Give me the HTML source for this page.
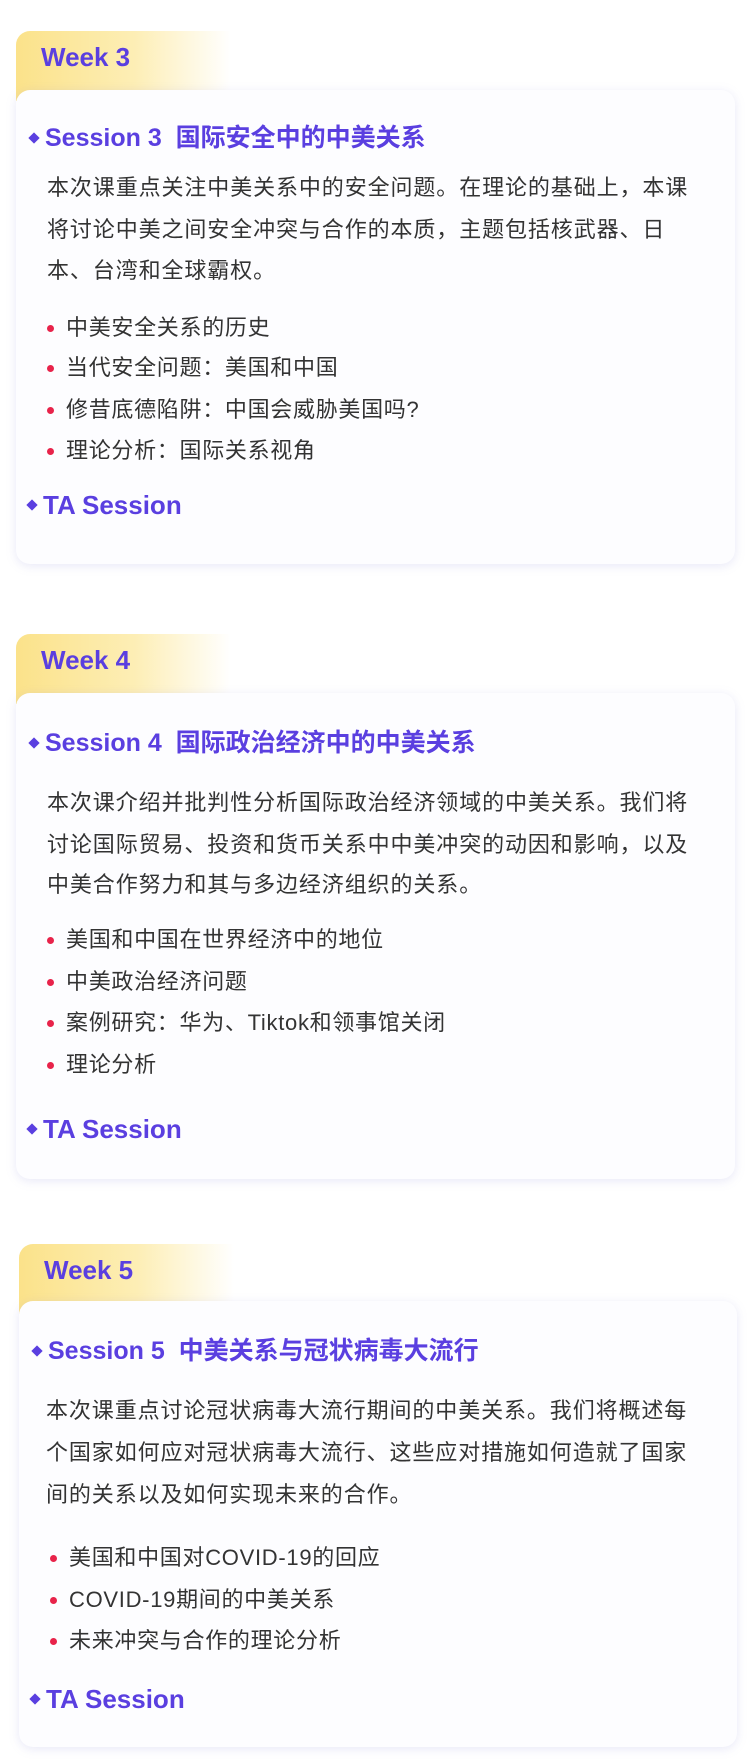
<!DOCTYPE html>
<html><head><meta charset="utf-8"><style>
*{margin:0;padding:0;box-sizing:border-box}
body{width:752px;height:1761px;background:#fff;position:relative;overflow:hidden;font-family:"Liberation Sans","Noto Sans CJK SC",sans-serif}
.tab{position:absolute;width:215px;height:70px;border-radius:14px 0 0 0;background:linear-gradient(90deg,#fbe28a 0%,#fdeeb5 55%,rgba(255,255,255,0) 100%)}
.tab span{position:absolute;left:25px;top:11px;font-size:26px;font-weight:bold;color:#5a3fe0}
.card{position:absolute;background:#fdfdff;border-radius:14px;box-shadow:0 2px 10px rgba(150,150,220,0.22)}
.l{position:absolute;height:40px;line-height:40px;white-space:nowrap}
.t{font-size:25px;font-weight:bold;color:#5a3fe0;padding-left:15px}
.t::before{content:"";position:absolute;left:0;top:16px;width:8px;height:8px;background:#5a3fe0;transform:rotate(45deg)}
.tt{font-size:26px}
.p{font-size:22px;color:#333;letter-spacing:0.9px}
.b{font-size:22px;color:#333;padding-left:19px;letter-spacing:0.7px}
.b::before{content:"";position:absolute;left:0;top:17px;width:7px;height:7px;border-radius:50%;background:#e8234a}
</style></head><body>

<div class="tab" style="left:16px;top:31px"><span>Week 3</span></div>
<div class="card" style="left:16px;top:90px;width:719px;height:474px"></div>
<div class="l t" style="left:30px;top:118px">Session 3&nbsp; 国际安全中的中美关系</div>
<div class="l p" style="left:47px;top:168px">本次课重点关注中美关系中的安全问题。在理论的基础上，本课</div>
<div class="l p" style="left:47px;top:210px">将讨论中美之间安全冲突与合作的本质，主题包括核武器、日</div>
<div class="l p" style="left:47px;top:251px">本、台湾和全球霸权。</div>
<div class="l b" style="left:47px;top:308px">中美安全关系的历史</div>
<div class="l b" style="left:47px;top:348px">当代安全问题：美国和中国</div>
<div class="l b" style="left:47px;top:390px">修昔底德陷阱：中国会威胁美国吗?</div>
<div class="l b" style="left:47px;top:431px">理论分析：国际关系视角</div>
<div class="l t tt" style="left:28px;top:485px">TA Session</div>

<div class="tab" style="left:16px;top:634px"><span>Week 4</span></div>
<div class="card" style="left:16px;top:693px;width:719px;height:486px"></div>
<div class="l t" style="left:30px;top:723px">Session 4&nbsp; 国际政治经济中的中美关系</div>
<div class="l p" style="left:47px;top:783px">本次课介绍并批判性分析国际政治经济领域的中美关系。我们将</div>
<div class="l p" style="left:47px;top:825px">讨论国际贸易、投资和货币关系中中美冲突的动因和影响，以及</div>
<div class="l p" style="left:47px;top:865px">中美合作努力和其与多边经济组织的关系。</div>
<div class="l b" style="left:47px;top:920px">美国和中国在世界经济中的地位</div>
<div class="l b" style="left:47px;top:962px">中美政治经济问题</div>
<div class="l b" style="left:47px;top:1003px">案例研究：华为、Tiktok和领事馆关闭</div>
<div class="l b" style="left:47px;top:1045px">理论分析</div>
<div class="l t tt" style="left:28px;top:1109px">TA Session</div>

<div class="tab" style="left:19px;top:1244px"><span>Week 5</span></div>
<div class="card" style="left:19px;top:1301px;width:718px;height:446px"></div>
<div class="l t" style="left:33px;top:1331px">Session 5&nbsp; 中美关系与冠状病毒大流行</div>
<div class="l p" style="left:46px;top:1391px">本次课重点讨论冠状病毒大流行期间的中美关系。我们将概述每</div>
<div class="l p" style="left:46px;top:1433px">个国家如何应对冠状病毒大流行、这些应对措施如何造就了国家</div>
<div class="l p" style="left:46px;top:1475px">间的关系以及如何实现未来的合作。</div>
<div class="l b" style="left:50px;top:1538px">美国和中国对COVID-19的回应</div>
<div class="l b" style="left:50px;top:1580px">COVID-19期间的中美关系</div>
<div class="l b" style="left:50px;top:1621px">未来冲突与合作的理论分析</div>
<div class="l t tt" style="left:31px;top:1679px">TA Session</div>

</body></html>
